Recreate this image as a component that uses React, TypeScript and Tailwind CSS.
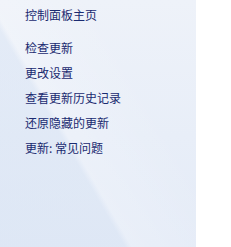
import React from "react";

const links = ["检查更新", "更改设置", "查看更新历史记录", "还原隐藏的更新", "更新: 常见问题"];

export default function App() {
  return (
    <div className="flex h-[247px] w-[231px] bg-white" style={{ fontFamily: '"Noto Sans CJK SC", "Noto Sans", sans-serif' }}>
      <div className="relative h-full w-[196px] overflow-hidden bg-[linear-gradient(180deg,#eef2f9_0%,#e8eef8_55%,#e4ebf7_100%)]">
        <div className="pointer-events-none absolute inset-0 bg-[linear-gradient(60deg,rgba(214,226,243,0.45)_0%,rgba(214,226,243,0.4)_37%,rgba(255,255,255,0.2)_39%,rgba(255,255,255,0)_70%)]" />
        <div className="relative flex flex-col pl-[25px] pt-[6px] text-[12px] leading-[17px] text-[#1a2a70]">
          <span>控制面板主页</span>
          <div className="mt-[16px] flex flex-col gap-[8px]">
            {links.map((l) => (
              <span key={l}>{l}</span>
            ))}
          </div>
        </div>
      </div>
    </div>
  );
}
